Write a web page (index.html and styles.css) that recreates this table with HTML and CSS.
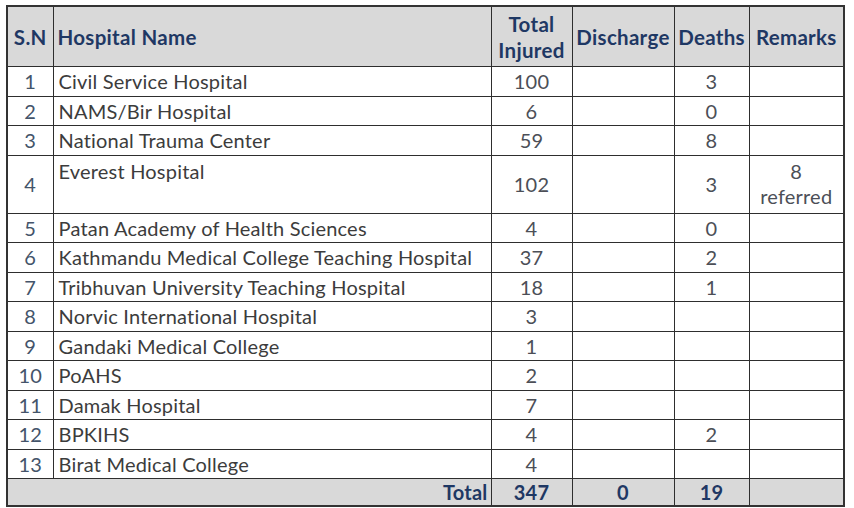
FILE: index.html
```html
<!DOCTYPE html>
<html lang="en">
<head>
<meta charset="utf-8">
<title>Hospital Injuries</title>
<link rel="stylesheet" href="styles.css">
</head>
<body>
<div class="sheet">
  <table class="report">
    <colgroup>
      <col class="c-sn">
      <col class="c-name">
      <col class="c-total">
      <col class="c-dis">
      <col class="c-death">
      <col class="c-rem">
    </colgroup>
    <thead>
      <tr class="head">
        <th>S.N</th>
        <th class="left">Hospital Name</th>
        <th>Total<br>Injured</th>
        <th>Discharge</th>
        <th>Deaths</th>
        <th>Remarks</th>
      </tr>
    </thead>
    <tbody>
      <tr><td class="sn">1</td><td class="name">Civil Service Hospital</td><td class="num">100</td><td></td><td class="num">3</td><td></td></tr>
      <tr><td class="sn">2</td><td class="name">NAMS/Bir Hospital</td><td class="num">6</td><td></td><td class="num">0</td><td></td></tr>
      <tr><td class="sn">3</td><td class="name">National Trauma Center</td><td class="num">59</td><td></td><td class="num">8</td><td></td></tr>
      <tr class="tall"><td class="sn">4</td><td class="name top">Everest Hospital</td><td class="num">102</td><td></td><td class="num">3</td><td class="num rem">8<br>referred</td></tr>
      <tr><td class="sn">5</td><td class="name">Patan Academy of Health Sciences</td><td class="num">4</td><td></td><td class="num">0</td><td></td></tr>
      <tr><td class="sn">6</td><td class="name">Kathmandu Medical College Teaching Hospital</td><td class="num">37</td><td></td><td class="num">2</td><td></td></tr>
      <tr><td class="sn">7</td><td class="name">Tribhuvan University Teaching Hospital</td><td class="num">18</td><td></td><td class="num">1</td><td></td></tr>
      <tr><td class="sn">8</td><td class="name">Norvic International Hospital</td><td class="num">3</td><td></td><td></td><td></td></tr>
      <tr><td class="sn">9</td><td class="name">Gandaki Medical College</td><td class="num">1</td><td></td><td></td><td></td></tr>
      <tr><td class="sn">10</td><td class="name">PoAHS</td><td class="num">2</td><td></td><td></td><td></td></tr>
      <tr><td class="sn">11</td><td class="name">Damak Hospital</td><td class="num">7</td><td></td><td></td><td></td></tr>
      <tr><td class="sn">12</td><td class="name">BPKIHS</td><td class="num">4</td><td></td><td class="num">2</td><td></td></tr>
      <tr><td class="sn">13</td><td class="name">Birat Medical College</td><td class="num">4</td><td></td><td></td><td></td></tr>
    </tbody>
    <tfoot>
      <tr class="foot">
        <td colspan="2" class="right">Total</td>
        <td>347</td>
        <td>0</td>
        <td>19</td>
        <td></td>
      </tr>
    </tfoot>
  </table>
</div>
</body>
</html>
```
FILE: styles.css
```css
html, body {
  margin: 0;
  padding: 0;
  background: #ffffff;
}

.sheet {
  padding: 5px 0 0 6px;
}

.report {
  border-collapse: collapse;
  table-layout: fixed;
  width: 837px;
  font-family: Lato, "Open Sans", sans-serif;
  font-size: 20px;
  letter-spacing: 0.2px;
  border: 2px solid #333333;
}

.c-sn { width: 46px; }
.c-name { width: 438px; }
.c-total { width: 81px; }
.c-dis { width: 102px; }
.c-death { width: 75px; }
.c-rem { width: 95px; }

.report th,
.report td {
  border: 1px solid #2e2e2e;
  padding: 0;
  text-align: center;
  vertical-align: middle;
  line-height: 26px;
}

.head th {
  height: 59px;
  background: #d9d9d9;
  color: #1f3864;
  font-weight: 700;
  font-size: 20.5px;
  letter-spacing: 0.3px;
  white-space: nowrap;
}

.head th.left {
  text-align: left;
  padding-left: 4px;
}

tbody tr td {
  height: 28.5px;
}

tbody tr.tall td {
  height: 55px;
}

.sn {
  color: #44546a;
}

.name {
  text-align: left !important;
  padding-left: 5px !important;
  color: #3c3c3c;
  white-space: nowrap;
}

.name.top {
  vertical-align: top !important;
  padding-top: 2px !important;
}

.num {
  color: #4c4f57;
}

.rem {
  line-height: 25px !important;
}

.foot td {
  height: 25px;
  background: #d9d9d9;
  color: #1f3864;
  font-weight: 700;
}

.foot td.right {
  text-align: right;
  padding-right: 3px;
}
```
